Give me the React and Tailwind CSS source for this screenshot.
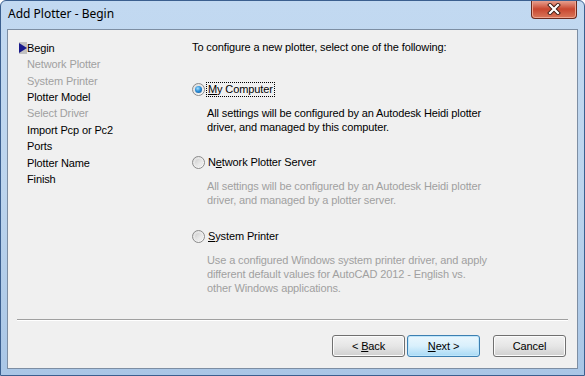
import React from 'react';

const navItems = [
  { label: 'Begin', active: true },
  { label: 'Network Plotter', disabled: true },
  { label: 'System Printer', disabled: true },
  { label: 'Plotter Model' },
  { label: 'Select Driver', disabled: true },
  { label: 'Import Pcp or Pc2' },
  { label: 'Ports' },
  { label: 'Plotter Name' },
  { label: 'Finish' },
];

function Radio({ checked }) {
  return (
    <span className="relative inline-flex w-[13px] h-[13px] rounded-full border border-[#8a8a8a] bg-gradient-to-br from-[#dcdcdc] to-[#ffffff] items-center justify-center shrink-0">
      <span className="w-[9px] h-[9px] rounded-full border border-[#e6e6e6] bg-gradient-to-br from-[#cfcfcf] to-[#f6f6f6] flex items-center justify-center">
        {checked && (
          <span className="w-[7px] h-[7px] rounded-full bg-[radial-gradient(circle_at_40%_35%,#a6e2ff_0%,#2e8fd8_45%,#0b4f8f_100%)]" />
        )}
      </span>
    </span>
  );
}

function Button({ children, primary }) {
  return (
    <button
      className={`w-[73px] h-[22px] rounded-[3px] border text-[11px] text-black flex items-center justify-center ${
        primary
          ? 'border-[#3c7fb1] bg-gradient-to-b from-[#eaf6fd] via-[#d9f0fc] to-[#a7d9f5] shadow-[inset_0_0_0_1px_#bfe6fb]'
          : 'border-[#707070] bg-gradient-to-b from-[#f2f2f2] via-[#e6e6e6] to-[#cfcfcf] shadow-[inset_0_0_0_1px_#fcfcfc]'
      }`}
    >
      <span className="whitespace-pre">{children}</span>
    </button>
  );
}

export default function App() {
  return (
    <div
      className="w-[585px] h-[376px] flex flex-col border border-[#3b5f8f] rounded-t-[6px] bg-gradient-to-b from-[#c2d9f1] via-[#bcd4ed] to-[#a9c6e6] overflow-hidden"
      style={{ fontFamily: '"Liberation Sans", Arial, sans-serif' }}
    >
      {/* Title bar */}
      <div className="h-[28px] flex items-start justify-between pl-[7px] pr-[7px] shrink-0">
        <div
          className="pt-[5px] text-[12px] text-black leading-[16px]"
          style={{ fontFamily: '"Noto Sans", "Open Sans", sans-serif' }}
        >
          Add Plotter - Begin
        </div>
        <div className="w-[46px] h-[19px] -mt-px rounded-b-[4px] border border-[#6b2a1e] border-t-0 bg-gradient-to-b from-[#e9a99a] via-[#c8462f] to-[#d9765a] flex items-center justify-center shadow-[inset_0_0_0_1px_#eea58f]">
          <svg width="14" height="12" viewBox="0 0 14 12">
            <path d="M3 2 L11 10 M11 2 L3 10" stroke="#3d1a12" strokeWidth="4" strokeLinecap="square" />
            <path d="M3 2 L11 10 M11 2 L3 10" stroke="#ffffff" strokeWidth="2.2" strokeLinecap="square" />
          </svg>
        </div>
      </div>

      {/* Client area */}
      <div className="flex-1 mx-[6px] mb-[6px] border border-[#7d8ea3] bg-[#f0f0f0] flex flex-col text-[11px] text-black tracking-[-0.12px]">
        <div className="flex flex-1">
          {/* Steps */}
          <div className="w-[184px] pl-[11px] pt-[10px] shrink-0">
            {navItems.map((item) => (
              <div key={item.label} className="flex items-center h-[16.375px]">
                <span className={`w-[8px] h-[12px] flex items-center justify-start ${item.active ? 'bg-[#c2c2c2]' : ''}`}>
                  {item.active && (
                    <svg width="8" height="10" viewBox="0 0 8 10">
                      <path d="M0 0 L8 5 L0 10 Z" fill="#1a1a8c" />
                    </svg>
                  )}
                </span>
                <span className={item.disabled ? 'text-[#a0a0a0]' : 'text-black'}>{item.label}</span>
              </div>
            ))}
          </div>

          {/* Options */}
          <div className="flex-1 pt-[9px]">
            <div className="h-[16px] leading-[16px]">To configure a new plotter, select one of the following:</div>

            <div className="mt-[26px] h-[16px] flex items-center gap-[1px]">
              <Radio checked />
              <span className="border border-dotted border-black px-[1px] leading-[13px]">
                <span className="underline">M</span>y Computer
              </span>
            </div>
            <div className="mt-[9px] pl-[15px] leading-[14px]">
              All settings will be configured by an Autodesk Heidi plotter<br />
              driver, and managed by this computer.
            </div>

            <div className="mt-[20px] h-[16px] flex items-center gap-[2px]">
              <Radio />
              <span className="pl-[1px]">
                N<span className="underline">e</span>twork Plotter Server
              </span>
            </div>
            <div className="mt-[9px] pl-[15px] leading-[14px] text-[#a0a0a0]">
              All settings will be configured by an Autodesk Heidi plotter<br />
              driver, and managed by a plotter server.
            </div>

            <div className="mt-[21px] h-[16px] flex items-center gap-[2px]">
              <Radio />
              <span className="pl-[1px]">
                <span className="underline">S</span>ystem Printer
              </span>
            </div>
            <div className="mt-[9px] pl-[15px] leading-[14px] text-[#a0a0a0]">
              Use a configured Windows system printer driver, and apply<br />
              different default values for AutoCAD 2012 - English vs.<br />
              other Windows applications.
            </div>
          </div>
        </div>

        {/* Separator */}
        <div className="mx-[9px] h-[2px] border-t border-[#a0a0a0] border-b-white border-b" />

        {/* Buttons */}
        <div className="h-[47px] flex items-start justify-end pr-[11px] pt-[14px]">
          <div className="flex gap-[2px]">
            <Button>
              {'< '}<span className="underline">B</span>ack
            </Button>
            <Button primary>
              <span className="underline">N</span>ext {'>'}
            </Button>
          </div>
          <div className="ml-[13px]">
            <Button>Cancel</Button>
          </div>
        </div>
      </div>
    </div>
  );
}
